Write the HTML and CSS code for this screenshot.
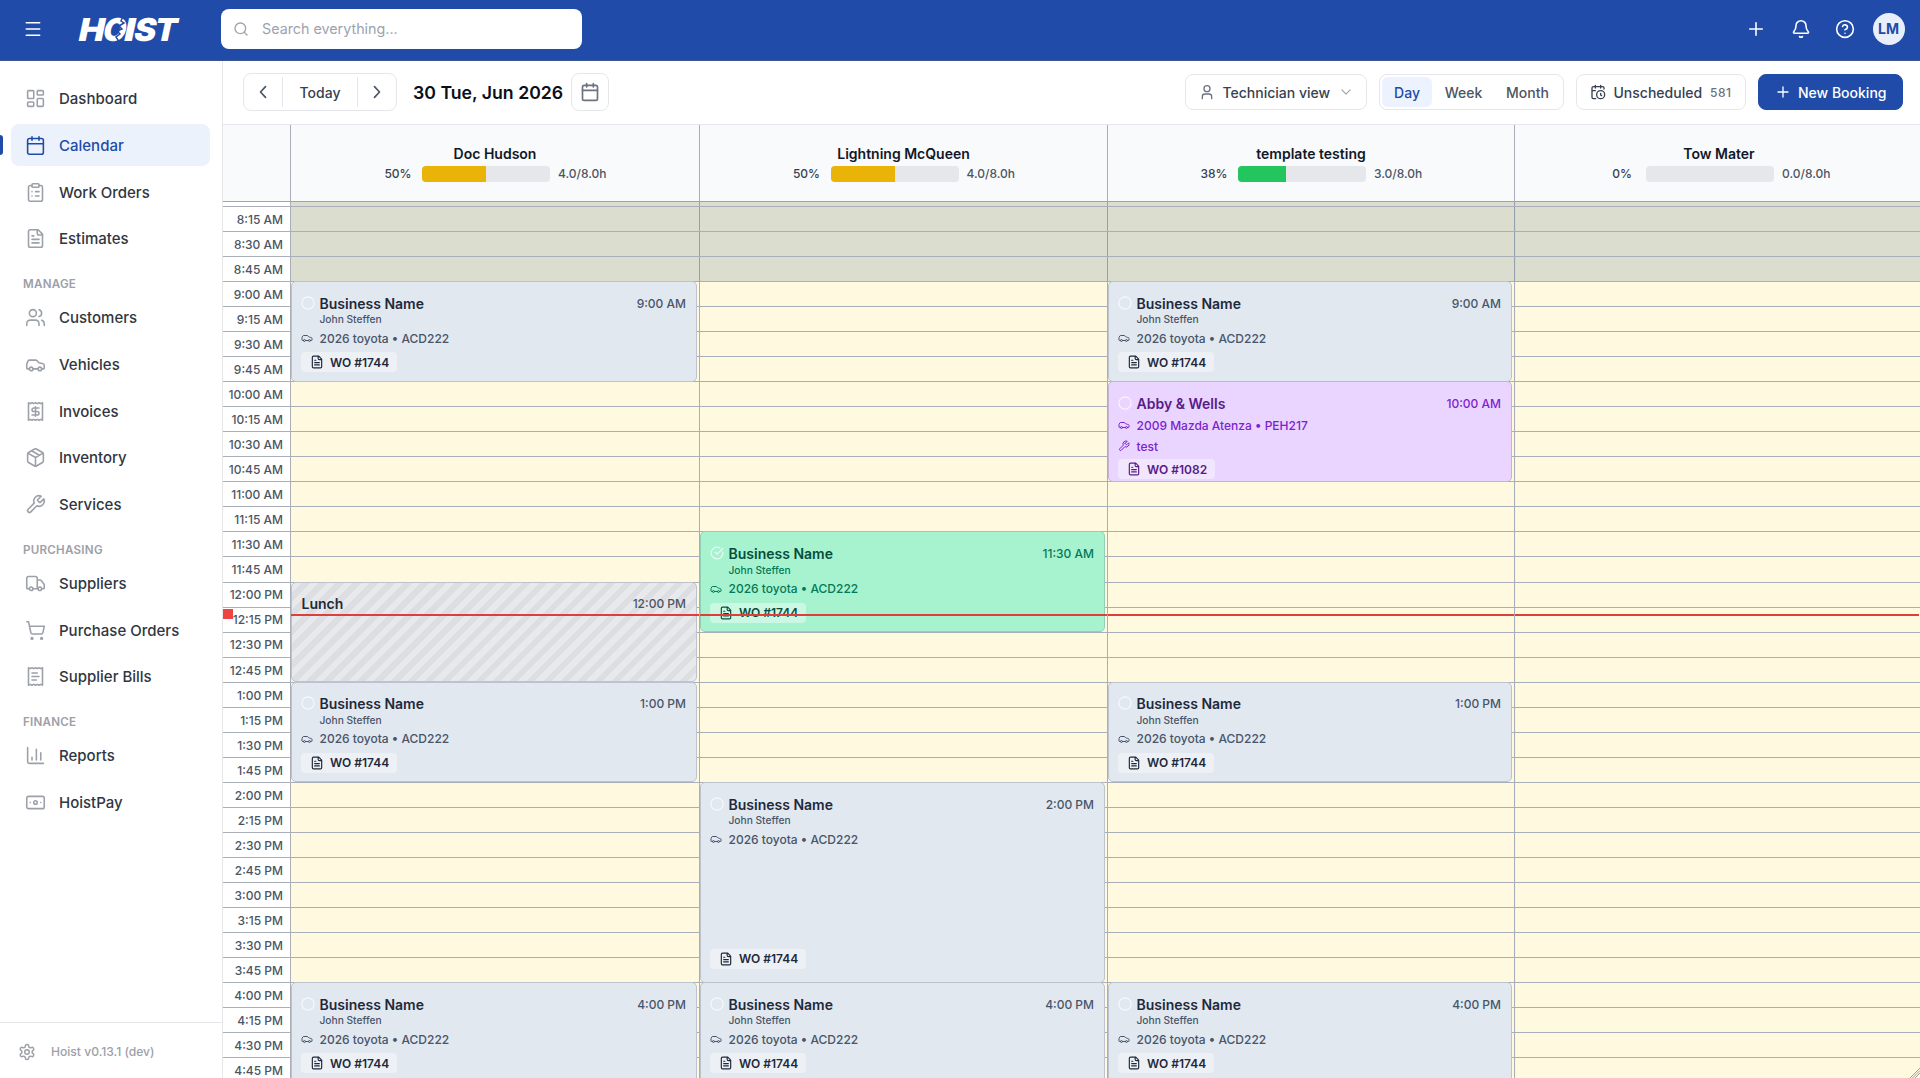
FILE: index.html
```html
<!DOCTYPE html>
<html lang="en">
<head>
<meta charset="utf-8">
<title>Hoist – Calendar</title>
<link rel="stylesheet" href="styles.css">
</head>
<body>
<svg class="sprite" aria-hidden="true">
  <symbol id="dash" viewBox="0 0 24 24"><rect x="3" y="3" width="7" height="9" rx="1"/><rect x="14" y="3" width="7" height="5" rx="1"/><rect x="14" y="12" width="7" height="9" rx="1"/><rect x="3" y="16" width="7" height="5" rx="1"/></symbol>
  <symbol id="cal" viewBox="0 0 24 24"><path d="M8 2v4M16 2v4M3 10h18"/><rect x="3" y="4" width="18" height="18" rx="2"/></symbol>
  <symbol id="clip" viewBox="0 0 24 24"><rect x="8" y="2" width="8" height="4" rx="1"/><path d="M16 4h2a2 2 0 0 1 2 2v14a2 2 0 0 1-2 2H6a2 2 0 0 1-2-2V6a2 2 0 0 1 2-2h2M12 11h4M12 16h4M8 11h.01M8 16h.01"/></symbol>
  <symbol id="file" viewBox="0 0 24 24"><path d="M15 2H6a2 2 0 0 0-2 2v16a2 2 0 0 0 2 2h12a2 2 0 0 0 2-2V7ZM14 2v4a2 2 0 0 0 2 2h4M10 9H8M16 13H8M16 17H8"/></symbol>
  <symbol id="users" viewBox="0 0 24 24"><path d="M16 21v-2a4 4 0 0 0-4-4H6a4 4 0 0 0-4 4v2M22 21v-2a4 4 0 0 0-3-3.87M16 3.13a4 4 0 0 1 0 7.75"/><circle cx="9" cy="7" r="4"/></symbol>
  <symbol id="car" viewBox="0 0 24 24"><path d="M19 17h2c.6 0 1-.4 1-1v-3c0-.9-.7-1.7-1.5-1.9C18.7 10.6 16 10 16 10s-1.3-1.4-2.2-2.3c-.5-.4-1.1-.7-1.8-.7H5c-.6 0-1.1.4-1.4.9l-1.4 2.9A3.7 3.7 0 0 0 2 12v4c0 .6.4 1 1 1h2M9 17h6"/><circle cx="7" cy="17" r="2"/><circle cx="17" cy="17" r="2"/></symbol>
  <symbol id="invoice" viewBox="0 0 24 24"><path d="M4 2v20l2-1 2 1 2-1 2 1 2-1 2 1 2-1 2 1V2l-2 1-2-1-2 1-2-1-2 1-2-1-2 1ZM16 8h-6a2 2 0 1 0 0 4h4a2 2 0 1 1 0 4H8M12 17.5v-11"/></symbol>
  <symbol id="bill" viewBox="0 0 24 24"><path d="M4 2v20l2-1 2 1 2-1 2 1 2-1 2 1 2-1 2 1V2l-2 1-2-1-2 1-2-1-2 1-2-1-2 1ZM14 8H8M16 12H8M13 16H8"/></symbol>
  <symbol id="box" viewBox="0 0 24 24"><path d="m7.5 4.27 9 5.15M21 8a2 2 0 0 0-1-1.73l-7-4a2 2 0 0 0-2 0l-7 4A2 2 0 0 0 3 8v8a2 2 0 0 0 1 1.73l7 4a2 2 0 0 0 2 0l7-4A2 2 0 0 0 21 16ZM3.3 7l8.7 5 8.7-5M12 22V12"/></symbol>
  <symbol id="wrench" viewBox="0 0 24 24"><path d="M14.7 6.3a1 1 0 0 0 0 1.4l1.6 1.6a1 1 0 0 0 1.4 0l3.77-3.77a6 6 0 0 1-7.94 7.94l-6.91 6.91a2.12 2.12 0 0 1-3-3l6.91-6.91a6 6 0 0 1 7.94-7.94l-3.76 3.76z"/></symbol>
  <symbol id="truck" viewBox="0 0 24 24"><path d="M14 18V6a2 2 0 0 0-2-2H4a2 2 0 0 0-2 2v11a1 1 0 0 0 1 1h2M15 18H9M19 18h2a1 1 0 0 0 1-1v-3.65a1 1 0 0 0-.22-.62l-3.48-4.35A1 1 0 0 0 17.52 8H14"/><circle cx="17" cy="18" r="2"/><circle cx="7" cy="18" r="2"/></symbol>
  <symbol id="cart" viewBox="0 0 24 24"><circle cx="8" cy="21" r="1"/><circle cx="19" cy="21" r="1"/><path d="M2.05 2.05h2l2.66 12.42a2 2 0 0 0 2 1.58h9.78a2 2 0 0 0 1.95-1.57l1.65-7.43H5.12"/></symbol>
  <symbol id="chart" viewBox="0 0 24 24"><path d="M3 3v16a2 2 0 0 0 2 2h16M18 17V9M13 17V5M8 17v-3"/></symbol>
  <symbol id="cash" viewBox="0 0 24 24"><rect x="2" y="5" width="20" height="14" rx="2"/><circle cx="12" cy="12" r="2"/><path d="M6 12h.01M18 12h.01"/></symbol>
  <symbol id="gear" viewBox="0 0 24 24"><path d="M12.22 2h-.44a2 2 0 0 0-2 2v.18a2 2 0 0 1-1 1.73l-.43.25a2 2 0 0 1-2 0l-.15-.08a2 2 0 0 0-2.73.73l-.22.38a2 2 0 0 0 .73 2.73l.15.1a2 2 0 0 1 1 1.72v.51a2 2 0 0 1-1 1.74l-.15.09a2 2 0 0 0-.73 2.73l.22.38a2 2 0 0 0 2.73.73l.15-.08a2 2 0 0 1 2 0l.43.25a2 2 0 0 1 1 1.73V20a2 2 0 0 0 2 2h.44a2 2 0 0 0 2-2v-.18a2 2 0 0 1 1-1.73l.43-.25a2 2 0 0 1 2 0l.15.08a2 2 0 0 0 2.73-.73l.22-.39a2 2 0 0 0-.73-2.73l-.15-.08a2 2 0 0 1-1-1.74v-.5a2 2 0 0 1 1-1.74l.15-.09a2 2 0 0 0 .73-2.73l-.22-.38a2 2 0 0 0-2.73-.73l-.15.08a2 2 0 0 1-2 0l-.43-.25a2 2 0 0 1-1-1.73V4a2 2 0 0 0-2-2z"/><circle cx="12" cy="12" r="3"/></symbol>
  <symbol id="menu" viewBox="0 0 24 24"><path d="M4 4.500h16M4 12h16M4 19.500h16"/></symbol>
  <symbol id="search" viewBox="0 0 24 24"><circle cx="11" cy="11" r="8"/><path d="m21 21-4.3-4.3"/></symbol>
  <symbol id="plus" viewBox="0 0 24 24"><path d="M4.500 12h15M12 4.500v15"/></symbol>
  <symbol id="bell" viewBox="0 0 24 24"><path d="M10.27 21a2 2 0 0 0 3.46 0M3.26 15.33A1 1 0 0 0 4 17h16a1 1 0 0 0 .74-1.67C19.41 13.96 18 12.5 18 8A6 6 0 0 0 6 8c0 4.5-1.41 5.96-2.74 7.33"/></symbol>
  <symbol id="help" viewBox="0 0 24 24"><circle cx="12" cy="12" r="10"/><path d="M9.09 9a3 3 0 0 1 5.83 1c0 2-3 3-3 3M12 17h.01"/></symbol>
  <symbol id="left" viewBox="0 0 24 24"><path d="m15 18.500-6-6.500 6-6.500"/></symbol>
  <symbol id="right" viewBox="0 0 24 24"><path d="m9 18.500 6-6.500-6-6.500"/></symbol>
  <symbol id="down" viewBox="0 0 24 24"><path d="m5 8.500 7 7 7-7"/></symbol>
  <symbol id="user" viewBox="0 0 24 24"><circle cx="12" cy="7" r="4.500"/><path d="M19 22v-3a4 4 0 0 0-4-4H9a4 4 0 0 0-4 4v3"/></symbol>
  <symbol id="calclock" viewBox="0 0 24 24"><path d="M21 7.500V6a2 2 0 0 0-2-2H5a2 2 0 0 0-2 2v14a2 2 0 0 0 2 2h3.500M16 2v4M8 2v4M3 10h5M17.500 17.500 16 16.300V14"/><circle cx="16" cy="16" r="6"/></symbol>
  <symbol id="ring" viewBox="0 0 24 24"><circle cx="12" cy="12" r="10.500"/></symbol>
  <symbol id="done" viewBox="0 0 24 24"><path d="M21.800 10A10 10 0 1 1 17 3.340M9 11l3 3L22 4"/></symbol>
</svg>

<header class="topbar">
  <svg class="ic menu-btn"><use href="#menu"/></svg>
  <svg class="logo" viewBox="0 0 104 26">
    <g transform="translate(0 24.500) skewX(-12)">
      <text x="-1" y="0" textLength="26" lengthAdjust="spacingAndGlyphs">H</text>
      <text x="23.500" y="0" textLength="23" lengthAdjust="spacingAndGlyphs">O</text>
      <text x="44.500" y="0" textLength="11" lengthAdjust="spacingAndGlyphs">I</text>
      <text x="54.500" y="0" textLength="22" lengthAdjust="spacingAndGlyphs">S</text>
      <text x="75" y="0" textLength="22.500" lengthAdjust="spacingAndGlyphs">T</text>
    </g>
    <path class="logo-cut" d="M45 0l-2 5 3 2-5 3 3 3-5 2 3 3-4 3 2 3-1 3"/>
  </svg>
  <div class="search"><svg class="ic"><use href="#search"/></svg><span>Search everything...</span></div>
  <div class="top-actions">
    <svg class="ic"><use href="#plus"/></svg>
    <svg class="ic"><use href="#bell"/></svg>
    <svg class="ic"><use href="#help"/></svg>
    <span class="avatar">LM</span>
  </div>
</header>

<div class="shell">
  <aside class="sidebar">
    <nav class="nav">
      <a class="nav-item"><svg class="ic"><use href="#dash"/></svg>Dashboard</a>
      <a class="nav-item active"><svg class="ic"><use href="#cal"/></svg>Calendar</a>
      <a class="nav-item"><svg class="ic"><use href="#clip"/></svg>Work Orders</a>
      <a class="nav-item"><svg class="ic"><use href="#file"/></svg>Estimates</a>
      <h2 class="nav-title">MANAGE</h2>
      <a class="nav-item"><svg class="ic"><use href="#users"/></svg>Customers</a>
      <a class="nav-item"><svg class="ic"><use href="#car"/></svg>Vehicles</a>
      <a class="nav-item"><svg class="ic"><use href="#invoice"/></svg>Invoices</a>
      <a class="nav-item"><svg class="ic"><use href="#box"/></svg>Inventory</a>
      <a class="nav-item"><svg class="ic"><use href="#wrench"/></svg>Services</a>
      <h2 class="nav-title">PURCHASING</h2>
      <a class="nav-item"><svg class="ic"><use href="#truck"/></svg>Suppliers</a>
      <a class="nav-item"><svg class="ic"><use href="#cart"/></svg>Purchase Orders</a>
      <a class="nav-item"><svg class="ic"><use href="#bill"/></svg>Supplier Bills</a>
      <h2 class="nav-title">FINANCE</h2>
      <a class="nav-item"><svg class="ic"><use href="#chart"/></svg>Reports</a>
      <a class="nav-item"><svg class="ic"><use href="#cash"/></svg>HoistPay</a>
    </nav>
    <footer class="side-foot"><svg class="ic"><use href="#gear"/></svg>Hoist v0.13.1 (dev)</footer>
  </aside>

  <main class="main">
    <div class="toolbar">
      <div class="stepper"><span class="step"><svg class="ic"><use href="#left"/></svg></span><span class="today">Today</span><span class="step"><svg class="ic"><use href="#right"/></svg></span></div>
      <h1 class="date">30 Tue, Jun 2026</h1>
      <span class="date-btn"><svg class="ic"><use href="#cal"/></svg></span>
      <div class="tools">
        <span class="btn view"><svg class="ic"><use href="#user"/></svg>Technician view<svg class="ic chev"><use href="#down"/></svg></span>
        <div class="segment"><span class="seg on">Day</span><span class="seg week">Week</span><span class="seg month">Month</span></div>
        <span class="btn unsched"><svg class="ic"><use href="#calclock"/></svg>Unscheduled<small>581</small></span>
        <span class="btn primary"><svg class="ic"><use href="#plus"/></svg>New Booking</span>
      </div>
    </div>

    <div class="heads">
      <div class="head corner"></div>
      <div class="head"><b>Doc Hudson</b><div class="load"><span class="pct">50%</span><span class="bar"><i class="amber" style="width:50%"></i></span><span class="hours">4.0/8.0h</span></div></div>
      <div class="head"><b>Lightning McQueen</b><div class="load"><span class="pct">50%</span><span class="bar"><i class="amber" style="width:50%"></i></span><span class="hours">4.0/8.0h</span></div></div>
      <div class="head"><b>template testing</b><div class="load"><span class="pct">38%</span><span class="bar"><i class="green" style="width:37.5%"></i></span><span class="hours">3.0/8.0h</span></div></div>
      <div class="head"><b>Tow Mater</b><div class="load"><span class="pct">0%</span><span class="bar"></span><span class="hours">0.0/8.0h</span></div></div>
    </div>

    <div class="board">
      <div class="lane times"></div><div class="lane c2"></div><div class="lane c3"></div><div class="lane c4"></div><div class="lane c5"></div>
      <div class="closed"></div>

      <div class="slot" style="grid-row:1"></div>
      <div class="slot" style="grid-row:2">8:15 AM</div>
      <div class="slot" style="grid-row:3">8:30 AM</div>
      <div class="slot" style="grid-row:4">8:45 AM</div>
      <div class="slot" style="grid-row:5">9:00 AM</div>
      <div class="slot" style="grid-row:6">9:15 AM</div>
      <div class="slot" style="grid-row:7">9:30 AM</div>
      <div class="slot" style="grid-row:8">9:45 AM</div>
      <div class="slot" style="grid-row:9">10:00 AM</div>
      <div class="slot" style="grid-row:10">10:15 AM</div>
      <div class="slot" style="grid-row:11">10:30 AM</div>
      <div class="slot" style="grid-row:12">10:45 AM</div>
      <div class="slot" style="grid-row:13">11:00 AM</div>
      <div class="slot" style="grid-row:14">11:15 AM</div>
      <div class="slot" style="grid-row:15">11:30 AM</div>
      <div class="slot" style="grid-row:16">11:45 AM</div>
      <div class="slot" style="grid-row:17">12:00 PM</div>
      <div class="slot" style="grid-row:18"><span class="now-dot"></span><span class="label">12:15 PM</span></div>
      <div class="slot" style="grid-row:19">12:30 PM</div>
      <div class="slot" style="grid-row:20">12:45 PM</div>
      <div class="slot" style="grid-row:21">1:00 PM</div>
      <div class="slot" style="grid-row:22">1:15 PM</div>
      <div class="slot" style="grid-row:23">1:30 PM</div>
      <div class="slot" style="grid-row:24">1:45 PM</div>
      <div class="slot" style="grid-row:25">2:00 PM</div>
      <div class="slot" style="grid-row:26">2:15 PM</div>
      <div class="slot" style="grid-row:27">2:30 PM</div>
      <div class="slot" style="grid-row:28">2:45 PM</div>
      <div class="slot" style="grid-row:29">3:00 PM</div>
      <div class="slot" style="grid-row:30">3:15 PM</div>
      <div class="slot" style="grid-row:31">3:30 PM</div>
      <div class="slot" style="grid-row:32">3:45 PM</div>
      <div class="slot" style="grid-row:33">4:00 PM</div>
      <div class="slot" style="grid-row:34">4:15 PM</div>
      <div class="slot" style="grid-row:35">4:30 PM</div>
      <div class="slot" style="grid-row:36">4:45 PM</div>

      <article class="event c2" style="grid-row:5/span 4"><div class="line title"><svg class="ic ring"><use href="#ring"/></svg><b>Business Name</b><time>9:00 AM</time></div><div class="who">John Steffen</div><div class="line car"><svg class="ic"><use href="#car"/></svg>2026 toyota • ACD222</div><span class="wo"><svg class="ic"><use href="#file"/></svg>WO #1744</span></article>
      <article class="event c2 lunch" style="grid-row:17/span 4"><div class="line title"><b>Lunch</b><time>12:00 PM</time></div></article>
      <article class="event c2" style="grid-row:21/span 4"><div class="line title"><svg class="ic ring"><use href="#ring"/></svg><b>Business Name</b><time>1:00 PM</time></div><div class="who">John Steffen</div><div class="line car"><svg class="ic"><use href="#car"/></svg>2026 toyota • ACD222</div><span class="wo"><svg class="ic"><use href="#file"/></svg>WO #1744</span></article>
      <article class="event c2" style="grid-row:33/span 4"><div class="line title"><svg class="ic ring"><use href="#ring"/></svg><b>Business Name</b><time>4:00 PM</time></div><div class="who">John Steffen</div><div class="line car"><svg class="ic"><use href="#car"/></svg>2026 toyota • ACD222</div><span class="wo"><svg class="ic"><use href="#file"/></svg>WO #1744</span></article>

      <article class="event c3 mint" style="grid-row:15/span 4"><div class="line title"><svg class="ic ring"><use href="#done"/></svg><b>Business Name</b><time>11:30 AM</time></div><div class="who">John Steffen</div><div class="line car"><svg class="ic"><use href="#car"/></svg>2026 toyota • ACD222</div><span class="wo"><svg class="ic"><use href="#file"/></svg>WO #1744</span></article>
      <article class="event c3 long" style="grid-row:25/span 8"><div class="line title"><svg class="ic ring"><use href="#ring"/></svg><b>Business Name</b><time>2:00 PM</time></div><div class="who">John Steffen</div><div class="line car"><svg class="ic"><use href="#car"/></svg>2026 toyota • ACD222</div><span class="wo"><svg class="ic"><use href="#file"/></svg>WO #1744</span></article>
      <article class="event c3" style="grid-row:33/span 4"><div class="line title"><svg class="ic ring"><use href="#ring"/></svg><b>Business Name</b><time>4:00 PM</time></div><div class="who">John Steffen</div><div class="line car"><svg class="ic"><use href="#car"/></svg>2026 toyota • ACD222</div><span class="wo"><svg class="ic"><use href="#file"/></svg>WO #1744</span></article>

      <article class="event c4" style="grid-row:5/span 4"><div class="line title"><svg class="ic ring"><use href="#ring"/></svg><b>Business Name</b><time>9:00 AM</time></div><div class="who">John Steffen</div><div class="line car"><svg class="ic"><use href="#car"/></svg>2026 toyota • ACD222</div><span class="wo"><svg class="ic"><use href="#file"/></svg>WO #1744</span></article>
      <article class="event c4 violet" style="grid-row:9/span 4"><div class="line title"><svg class="ic ring"><use href="#ring"/></svg><b>Abby &amp; Wells</b><time>10:00 AM</time></div><div class="line car"><svg class="ic"><use href="#car"/></svg>2009 Mazda Atenza • PEH217</div><div class="line job"><svg class="ic"><use href="#wrench"/></svg>test</div><span class="wo"><svg class="ic"><use href="#file"/></svg>WO #1082</span></article>
      <article class="event c4" style="grid-row:21/span 4"><div class="line title"><svg class="ic ring"><use href="#ring"/></svg><b>Business Name</b><time>1:00 PM</time></div><div class="who">John Steffen</div><div class="line car"><svg class="ic"><use href="#car"/></svg>2026 toyota • ACD222</div><span class="wo"><svg class="ic"><use href="#file"/></svg>WO #1744</span></article>
      <article class="event c4" style="grid-row:33/span 4"><div class="line title"><svg class="ic ring"><use href="#ring"/></svg><b>Business Name</b><time>4:00 PM</time></div><div class="who">John Steffen</div><div class="line car"><svg class="ic"><use href="#car"/></svg>2026 toyota • ACD222</div><span class="wo"><svg class="ic"><use href="#file"/></svg>WO #1744</span></article>

      <div class="now-line c2"></div><div class="now-line c3"></div><div class="now-line c4"></div><div class="now-line c5"></div>
    </div>
  </main>
</div>
<svg class="grip" viewBox="0 0 12 12"><path d="M0 12 12 0M3 12l9-9M6 12l6-6"/></svg>
</body>
</html>
```
FILE: styles.css
```css
* { box-sizing: border-box; }
html, body { height: 100%; }
body {
  margin: 0;
  display: flex;
  flex-direction: column;
  overflow: hidden;
  background: #fff;
  color: #1f2937;
  font-family: Inter, "Liberation Sans", sans-serif;
  font-size: 14px;
}
.sprite { display: none; }
.ic {
  width: 20px;
  height: 20px;
  flex: none;
  fill: none;
  stroke: currentColor;
  stroke-width: 2;
  stroke-linecap: round;
  stroke-linejoin: round;
}

/* Top bar */
.topbar {
  flex: none;
  height: 61px;
  display: flex;
  align-items: center;
  padding: 0 15.5px 3px 23px;
  background: #204ba8;
  border-bottom: 1px solid #3b5690;
  color: #fff;
}
.menu-btn { width: 20px; height: 20px; }
.logo { width: 104px; height: 26px; margin-left: 35px; overflow: visible; }
.logo text { font: 900 31.500px Inter, sans-serif; fill: #fff; }
.logo-cut { fill: none; stroke: #204ba8; stroke-width: 1.500; }
.search {
  width: 361px;
  height: 40px;
  margin-left: 39px;
  padding: 0 12px;
  display: flex;
  align-items: center;
  gap: 13px;
  border-radius: 8px;
  background: #fff;
  color: #9ca3af;
  font-size: 14.300px;
}
.search .ic { width: 16px; height: 16px; }
.top-actions { margin-left: auto; display: flex; align-items: center; gap: 24.500px; }
.top-actions .ic { stroke-width: 1.900; }
.avatar {
  width: 32px;
  height: 32px;
  margin-left: -7px;
  display: grid;
  place-items: center;
  border-radius: 50%;
  background: #e9effa;
  color: #204ba8;
  font-size: 14px;
  font-weight: 700;
}

.shell { flex: 1; min-height: 0; display: flex; }

/* Sidebar */
.sidebar {
  flex: none;
  width: 223px;
  display: flex;
  flex-direction: column;
  border-right: 1px solid #e5e7eb;
}
.nav { flex: 1; padding: 16.400px 12px 0 11px; }
.nav-item {
  position: relative;
  display: flex;
  align-items: center;
  gap: 13px;
  height: 42px;
  margin-bottom: 4.600px;
  padding: 1px 0 0 14px;
  border-radius: 8px;
  color: #303642;
  font-size: 15px;
  font-weight: 500;
}
.nav-item .ic { width: 21px; height: 21px; color: #9ca0a8; stroke-width: 1.800; }
.nav-item.active { background: #ecf2fb; color: #204ba8; }
.nav-item.active .ic { color: #204ba8; }
.nav-item.active::before {
  content: "";
  position: absolute;
  left: -14px;
  top: 11px;
  width: 5.500px;
  height: 20px;
  border-radius: 3px;
  background: #204ba8;
}
.nav-title {
  margin: 0;
  height: 32.600px;
  padding: 12.500px 0 0 12px;
  line-height: 16px;
  color: #9ca0a8;
  font-size: 11.600px;
  font-weight: 600;
  letter-spacing: .25px;
}
.side-foot {
  height: 56px;
  display: flex;
  align-items: center;
  gap: 15px;
  padding: 2px 0 0 18px;
  border-top: 1px solid #e5e7eb;
  color: #9ca0a8;
  font-size: 12.100px;
  font-weight: 500;
}
.side-foot .ic { width: 18px; height: 18px; }

/* Toolbar */
.main { flex: 1; min-width: 0; display: flex; flex-direction: column; }
.toolbar {
  flex: none;
  height: 64px;
  display: flex;
  align-items: center;
  padding: 0 17px 1px 20px;
  border-bottom: 1px solid #e5e7eb;
  color: #374151;
}
.stepper {
  display: flex;
  align-items: center;
  width: 154px;
  height: 38px;
  border: 1px solid #e5e7eb;
  border-radius: 8px;
  font-weight: 500;
}
.step { flex: 1; display: grid; place-items: center; color: #4b5563; }
.today { width: 76px; height: 30px; display: grid; place-items: center; border: solid #e5e7eb; border-width: 0 1px; }
.date { margin: 0 8px 0 16px; width: 150px; white-space: nowrap; color: #0b0f19; font-size: 17.700px; font-weight: 600; }
.date-btn { width: 38px; height: 38px; display: grid; place-items: center; border: 1px solid #e5e7eb; border-radius: 8px; color: #6b7280; }
.tools { margin-left: auto; display: flex; gap: 12px; }
.btn, .segment {
  display: flex;
  align-items: center;
  height: 36px;
  border: 1px solid #e5e7eb;
  border-radius: 8px;
  font-weight: 500;
  white-space: nowrap;
}
.btn .ic { width: 16px; height: 16px; }
.view { width: 182px; padding-left: 12.500px; gap: 8px; }
.view .ic { color: #6b7280; }
.view .chev { width: 14px; height: 14px; color: #9ca3af; margin-left: 1px; }
.segment { width: 185px; padding: 2px; color: #4b5563; }
.seg { display: grid; place-items: center; height: 30px; border-radius: 6px; }
.seg.on { width: 50px; background: #ecf3fe; color: #204ba8; }
.week { width: 63px; }
.month { width: 65px; }
.unsched { width: 170px; padding-left: 12.500px; gap: 8px; }
.unsched small { margin-left: 0; color: #6b7280; font-size: 12px; letter-spacing: .5px; }
.primary { width: 145px; padding-left: 15.500px; gap: 7.500px; background: #204ba8; border-color: #204ba8; color: #fff; }

/* Technician header cells */
.heads, .board { display: grid; grid-template-columns: 68px 409px 408px 407px 1fr; }
.heads { flex: none; height: 77px; background: #f9fafb; border-bottom: 1px solid #9ca3af; }
.head {
  display: flex;
  flex-direction: column;
  align-items: center;
  gap: 3px;
  padding-top: 18.500px;
  border-right: 1px solid #a9aeb8;
  color: #111827;
}
.head:last-child { border-right: 0; padding-left: 3px; }
.head b { font-size: 14px; font-weight: 600; line-height: 19px; }
.load { display: flex; align-items: center; gap: 8px; color: #4b5563; font-size: 12px; line-height: 16px; }
.pct { width: 32px; text-align: center; font-weight: 500; color: #374151; }
.hours { width: 50px; font-weight: 500; }
.pct, .hours { padding-top: .500px; }
.bar { width: 128px; height: 16px; border-radius: 4px; overflow: hidden; background: #e5e7eb; }
.bar i { display: block; height: 100%; }
.amber { background: #eab308; }
.green { background: #22c55e; }

/* Day board: one grid row per quarter hour */
.board {
  flex: 1;
  min-height: 0;
  overflow: hidden;
  grid-template-rows: 4.800px repeat(35, 25.050px);
}
.lane { grid-row: 1 / -1; background: #fff9e0; border-right: 1px solid #a9aeb8; }
.lane.times { grid-column: 1; background: #fff; }
.lane.c5 { border-right: 0; border-left: 1px solid #f3f3ef; }
.c2 { grid-column: 2; }
.c3 { grid-column: 3; }
.c4 { grid-column: 4; }
.c5 { grid-column: 5; }
.closed { grid-row: 1 / 5; grid-column: 2 / -1; background: rgba(75, 108, 138, .2); }
.slot {
  position: relative;
  grid-column: 1 / -1;
  display: flex;
  align-items: center;
  justify-content: flex-end;
  padding: .700px calc(100% - 60px) 0 0;
  border-bottom: 1px solid #a9afb8;
  color: #4b5563;
  font-size: 12px;
  font-weight: 500;
  white-space: nowrap;
}
.now-dot { position: absolute; left: 0; top: 1.500px; width: 10px; height: 10px; background: #ef4444; }
.label { position: relative; }
.now-line { grid-row: 18; height: 2px; margin: 6.500px 1px 0 0; background: #dc3f3c; z-index: 2; }

/* Bookings */
.event {
  --strong: #1e293b;
  --soft: #475569;
  z-index: 1;
  display: flex;
  flex-direction: column;
  align-items: flex-start;
  overflow: hidden;
  margin: -1px 3.500px .500px 0;
  padding: 12.200px 9.500px 0 9px;
  border: 1px solid #bcc3ce;
  border-radius: 5px;
  background: #e2e8f0;
  color: var(--soft);
  font-size: 12px;
  font-weight: 500;
}
.line { display: flex; align-items: center; align-self: stretch; height: 18px; }
.line .ic { width: 12px; height: 12px; margin-right: 6.500px; }
.line .ring { width: 14px; height: 14px; margin: -1px 4.500px 0 0; color: rgba(255, 255, 255, .75); }
.title b { color: var(--strong); font-size: 14px; font-weight: 600; }
.title time { margin-left: auto; }
.who { padding-left: 18.500px; font-size: 10.200px; line-height: 14px; }
.car { margin-top: 3px; }
.wo {
  display: flex;
  align-items: center;
  flex: none;
  height: 20px;
  margin-top: 5px;
  padding: 0 8px 0 9px;
  gap: 6px;
  border-radius: 4px;
  background: rgba(255, 255, 255, .4);
  color: var(--strong);
  font-size: 12px;
  font-weight: 600;
}
.wo .ic { width: 14px; height: 14px; }
.long .wo { margin: auto 0 13px; }
.mint { --strong: #064e3b; --soft: #047857; background: #a7f3d0; border-color: #93cfb6; }
.violet { --strong: #581c87; --soft: #7e22ce; background: #e9d5ff; border-color: #c3b3d3; }
.violet .car { margin-top: 4px; }
.violet .job { margin-top: 3px; }
.violet .wo { margin-top: 4px; }
.lunch { background: repeating-linear-gradient(-45deg, #e8e9ec 0 6px, #dddee2 6px 12px); --strong: #1f2937; --soft: #4b5563; }
.lunch .title b { margin-left: .500px; }

.grip { position: fixed; right: 0; bottom: 0; width: 10px; height: 10px; fill: none; stroke: #8f8f86; stroke-width: 1; }
```
